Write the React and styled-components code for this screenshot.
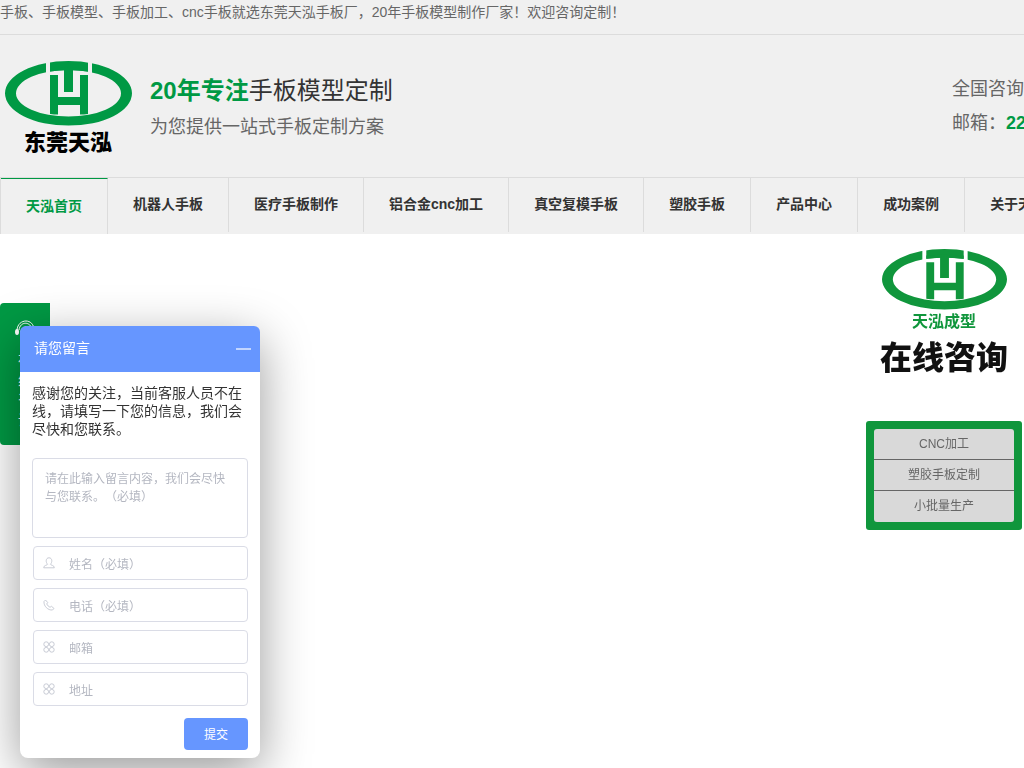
import React from 'react';
import styled, { createGlobalStyle, css } from 'styled-components';

const GREEN = '#009944';
const BLUE = '#6696ff';

const GlobalStyle = createGlobalStyle`
  * {
    box-sizing: border-box;
  }

  body {
    margin: 0;
    min-height: 100vh;
    overflow: hidden;
    background: #fff;
    color: #666;
    font-family: "Liberation Sans", "Noto Sans CJK SC", sans-serif;
    font-size: 14px;
    text-spacing-trim: space-all;
  }

  h1, p, ul {
    margin: 0;
    padding: 0;
  }

  a {
    color: inherit;
    text-decoration: none;
  }

  button, input, textarea {
    font-family: inherit;
    text-spacing-trim: inherit;
  }
`;

const Header = styled.header`
  overflow: hidden;
  background: #f0f0f0;
`;

const TopBar = styled.div`
  height: 35px;
  border-bottom: 1px solid #dcdcdc;
  line-height: 24px;
`;

const Container = styled.div`
  min-width: 1200px;
  max-width: 1200px;
  margin: 0 auto;
`;

const Brand = styled(Container)`
  display: flex;
  align-items: flex-start;
  height: 142px;
  padding-top: 26px;
`;

const LogoLink = styled.a`
  display: flex;
  flex-direction: column;
  align-items: center;
  width: 136px;
  margin-right: 14px;
`;

const LogoName = styled.span`
  margin-top: 2px;
  color: #000;
  font-size: 22px;
  font-weight: 900;
  line-height: 30px;
`;

const Slogan = styled.div`
  flex: 1;
  padding-top: 10px;
`;

const SloganTitle = styled.h1`
  color: #333;
  font-size: 24px;
  font-weight: normal;
  line-height: 39px;

  strong {
    color: ${GREEN};
  }
`;

const SloganText = styled.p`
  font-size: 18px;
  line-height: 34px;
`;

const Contact = styled.div`
  width: 248px;
  padding-top: 11px;
  font-size: 18px;
  line-height: 34px;

  strong {
    color: ${GREEN};
  }
`;

const Nav = styled.nav`
  border-top: 1px solid #dcdcdc;
`;

const NavList = styled.ul`
  display: flex;
  min-width: 1200px;
  height: 56px;
  border-left: 1px solid #dcdcdc;
  list-style: none;
`;

const NavLink = styled.a`
  display: block;
  height: 54px;
  padding: 0 25px;
  border-right: 1px solid #dcdcdc;
  color: #333;
  font-weight: bold;
  line-height: 52px;
  white-space: nowrap;

  ${({ $active }) =>
    $active &&
    css`
      height: 56px;
      border-top: 1px solid ${GREEN};
      color: ${GREEN};
      line-height: 55px;
    `}
`;

const ServiceTab = styled.a`
  position: fixed;
  top: 303px;
  left: 0;
  display: flex;
  flex-direction: column;
  align-items: center;
  width: 50px;
  height: 142px;
  padding-top: 17px;
  border-radius: 4px 0 0 4px;
  background: ${GREEN};
  color: #fff;
  font-size: 14px;
  line-height: 20px;

  span {
    width: 14px;
    margin-top: 6px;
  }
`;

const Consult = styled.aside`
  position: fixed;
  top: 240px;
  right: 2px;
  width: 156px;
`;

const ConsultHead = styled.div`
  display: flex;
  flex-direction: column;
  align-items: center;
  height: 181px;
  padding-top: 9px;
`;

const ConsultBrand = styled.span`
  color: #10963c;
  font-size: 16px;
  font-weight: bold;
  line-height: 24px;
`;

const ConsultTitle = styled.strong`
  color: #111;
  font-size: 32px;
  font-weight: 900;
  line-height: 48px;
`;

const ConsultList = styled.ul`
  padding: 8px;
  border-radius: 3px;
  background: #10963c;
  list-style: none;
`;

const ConsultItem = styled.li`
  height: 31px;
  border-bottom: 1px solid #666;
  background: #d9d9d9;
  font-size: 12px;
  line-height: 31px;
  text-align: center;

  &:first-child {
    border-radius: 3px 3px 0 0;
  }

  &:last-child {
    border-bottom: 0;
    border-radius: 0 0 3px 3px;
  }
`;

const Dialog = styled.section`
  position: fixed;
  bottom: 10px;
  left: 20px;
  width: 240px;
  border-radius: 8px;
  background: #fff;
  box-shadow: 0 14px 50px rgba(0, 0, 0, 0.4);
`;

const DialogHeader = styled.header`
  display: flex;
  align-items: center;
  justify-content: space-between;
  height: 46px;
  padding: 0 9px 0 14px;
  border-radius: 6px 6px 0 0;
  background: ${BLUE};
  color: #fff;
  line-height: 18px;
`;

const DialogTitle = styled.span`
  padding-bottom: 2px;
`;

const Minimize = styled.button`
  display: flex;
  padding: 0;
  border: 0;
  background: none;
  cursor: pointer;

  &::before {
    content: '';
    width: 15px;
    height: 2px;
    background: rgba(255, 255, 255, 0.6);
  }
`;

const Form = styled.form`
  display: flex;
  flex-direction: column;
  gap: 8px;
  padding: 12px 12px 8px;
`;

const Notice = styled.p`
  margin-bottom: 12px;
  color: #333;
  line-height: 18px;
`;

const Message = styled.textarea`
  display: block;
  width: 100%;
  height: 80px;
  padding: 11px 12px;
  border: 1px solid #dadce6;
  border-radius: 4px;
  font-size: 12px;
  line-height: 18px;
  resize: none;

  &::placeholder {
    color: #b4b7c1;
  }
`;

const Field = styled.label`
  display: flex;
  align-items: center;
  gap: 14px;
  height: 34px;
  margin-left: 1px;
  padding: 0 9px;
  border: 1px solid #dadce6;
  border-radius: 4px;
`;

const FieldInput = styled.input`
  flex: 1;
  min-width: 0;
  padding: 4px 0 0;
  border: 0;
  outline: 0;
  background: none;
  font-size: 12px;

  &::placeholder {
    color: #b4b7c1;
  }
`;

const Submit = styled.button`
  align-self: flex-end;
  width: 64px;
  height: 32px;
  margin-top: 4px;
  padding: 0 0 2px;
  border: 0;
  border-radius: 4px;
  background: ${BLUE};
  color: #fff;
  font-size: 12px;
  cursor: pointer;
`;

function LogoMark({ width, height, color, gap }) {
  return (
    <svg width={width} height={height} viewBox="0 0 127 65" preserveAspectRatio="none" aria-hidden="true">
      <path
        fill={color}
        fillRule="evenodd"
        d="M0 32.300A63.500 32.300 0 0 1 127 32.300A63.500 32.300 0 0 1 0 32.300ZM11 32.300A52.500 23.300 0 0 0 116 32.300A52.500 23.300 0 0 0 11 32.300Z"
      />
      <path d="M41 0H45V13H41ZM83 0H87V13H83Z" fill={gap} />
      <path d="M45 7Q64 5 83 7V10.500Q76 9.500 68 9.300V31H59V9.300Q52 9.500 45 10.500Z" fill={color} />
      <path d="M45 14H53V36H75V14H83V53Q79 53.500 75 53.600V44H53V53.600Q49 53.500 45 53Z" fill={color} />
    </svg>
  );
}

function FieldIcon({ type }) {
  return (
    <svg width="12" height="12" viewBox="0 0 12 12" fill="none" stroke="#c3c6d0" strokeWidth="0.9" aria-hidden="true">
      {type === 'user' && (
        <path d="M4.600 7.200C2.600 5.500 2.500 0.800 6 0.800S9.400 5.500 7.400 7.200C7.500 8.500 11.300 7.800 11.300 10.800H0.700C0.700 7.800 4.500 8.500 4.600 7.200Z" />
      )}
      {type === 'phone' && (
        <path d="M1 2.500L2.500 1L4.700 3.500L3.700 5C4.500 6.500 5.500 7.500 7 8.300L8.500 7.300L11 9.500L9.500 11C5 11.500 0.500 7 1 2.500Z" />
      )}
      {type === 'grid' && (
        <>
          <circle cx="3.200" cy="3.200" r="2.400" />
          <circle cx="8.800" cy="3.200" r="2.400" />
          <circle cx="3.200" cy="8.800" r="2.400" />
          <circle cx="8.800" cy="8.800" r="2.400" />
        </>
      )}
    </svg>
  );
}

const navItems = [
  '天泓首页',
  '机器人手板',
  '医疗手板制作',
  '铝合金cnc加工',
  '真空复模手板',
  '塑胶手板',
  '产品中心',
  '成功案例',
  '关于天泓',
];

const fields = [
  { name: 'name', icon: 'user', placeholder: '姓名（必填）' },
  { name: 'phone', icon: 'phone', placeholder: '电话（必填）' },
  { name: 'email', icon: 'grid', placeholder: '邮箱' },
  { name: 'address', icon: 'grid', placeholder: '地址' },
];

function App() {
  return (
    <>
      <GlobalStyle />
      <Header>
        <TopBar>
          <Container>手板、手板模型、手板加工、cnc手板就选东莞天泓手板厂，20年手板模型制作厂家！欢迎咨询定制！</Container>
        </TopBar>
        <Brand>
          <LogoLink href="#">
            <LogoMark width={127} height={65} color={GREEN} gap="#f0f0f0" />
            <LogoName>东莞天泓</LogoName>
          </LogoLink>
          <Slogan>
            <SloganTitle>
              <strong>20年专注</strong>手板模型定制
            </SloganTitle>
            <SloganText>为您提供一站式手板定制方案</SloganText>
          </Slogan>
          <Contact>
            <p>全国咨询</p>
            <p>
              邮箱：<strong>22</strong>
            </p>
          </Contact>
        </Brand>
        <Nav>
          <NavList>
            {navItems.map((item, index) => (
              <li key={item}>
                <NavLink href="#" $active={index === 0}>{item}</NavLink>
              </li>
            ))}
          </NavList>
        </Nav>
      </Header>

      <ServiceTab href="#">
        <svg width="22" height="24" viewBox="0 0 22 24" fill="none" stroke="#fff" aria-hidden="true">
          <path d="M3 10C4 -2 20 -2 20 10M5 10C6 1 17 1 18 10" />
          <ellipse cx="3" cy="12" rx="2" ry="3" fill="#fff" stroke="none" />
        </svg>
        <span>在线咨询</span>
      </ServiceTab>

      <Consult>
        <ConsultHead>
          <LogoMark width={125} height={61} color="#10963c" gap="#fff" />
          <ConsultBrand>天泓成型</ConsultBrand>
          <ConsultTitle>在线咨询</ConsultTitle>
        </ConsultHead>
        <ConsultList>
          <ConsultItem><a href="#">CNC加工</a></ConsultItem>
          <ConsultItem><a href="#">塑胶手板定制</a></ConsultItem>
          <ConsultItem><a href="#">小批量生产</a></ConsultItem>
        </ConsultList>
      </Consult>

      <Dialog>
        <DialogHeader>
          <DialogTitle>请您留言</DialogTitle>
          <Minimize type="button" aria-label="最小化" />
        </DialogHeader>
        <Form onSubmit={(e) => e.preventDefault()}>
          <Notice>感谢您的关注，当前客服人员不在线，请填写一下您的信息，我们会尽快和您联系。</Notice>
          <Message aria-label="留言内容" placeholder="请在此输入留言内容，我们会尽快与您联系。（必填）" />
          {fields.map(({ name, icon, placeholder }) => (
            <Field key={name}>
              <FieldIcon type={icon} />
              <FieldInput name={name} aria-label={placeholder} placeholder={placeholder} />
            </Field>
          ))}
          <Submit type="submit">提交</Submit>
        </Form>
      </Dialog>
    </>
  );
}

export default App;
